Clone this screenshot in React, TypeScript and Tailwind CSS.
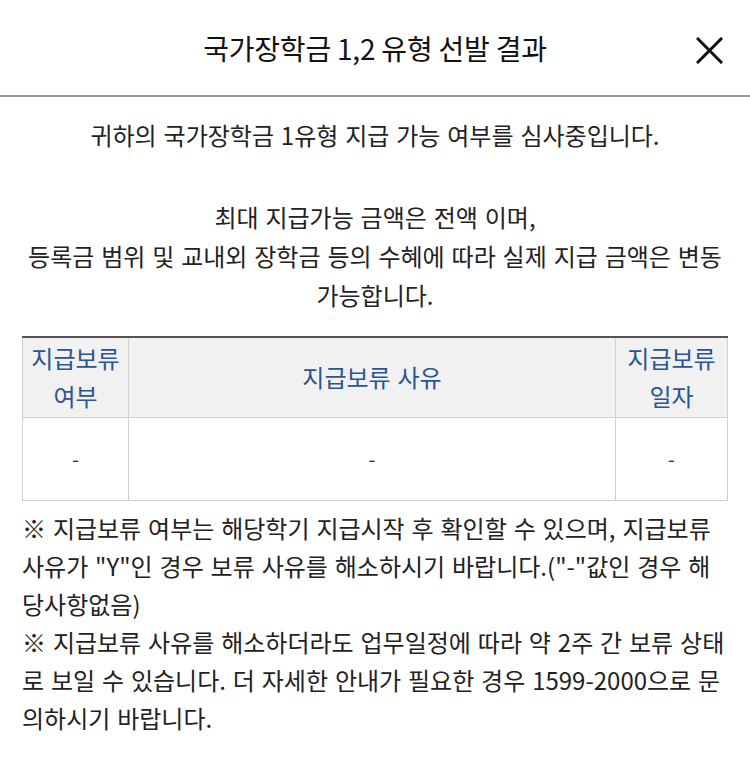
import React from "react";

export default function App() {
  const font = { fontFamily: '"Noto Sans CJK KR", "Noto Sans", sans-serif' };
  return (
    <div className="w-[750px] min-h-[779px] bg-white text-[#222]" style={font}>
      <header className="relative h-[97px] flex items-center justify-center border-b-2 border-[#9a9a9a]">
        <h1 className="text-[28px] leading-none text-[#111] tracking-[-0.2px]">국가장학금 1,2 유형 선발 결과</h1>
        <button className="absolute right-[27px] top-[37px] w-[27px] h-[27px] flex items-center justify-center" aria-label="닫기">
          <svg width="27" height="27" viewBox="0 0 27 27" fill="none" stroke="#111" strokeWidth="3" strokeLinecap="square">
            <line x1="2" y1="2" x2="25" y2="25" />
            <line x1="25" y1="2" x2="2" y2="25" />
          </svg>
        </button>
      </header>
      <main className="px-[22px] pt-[18px] text-[24px] [word-spacing:1.5px]">
        <p className="text-center leading-[39px]">귀하의 국가장학금 1유형 지급 가능 여부를 심사중입니다.</p>
        <p className="mt-[43px] text-center leading-[39px]">
          최대 지급가능 금액은 전액 이며,
          <br />
          등록금 범위 및 교내외 장학금 등의 수혜에 따라 실제 지급 금액은 변동 가능합니다.
        </p>
        <table className="mt-[22px] w-[706px] border-collapse text-[24px]">
          <thead>
            <tr className="h-[80px] bg-[#f1f1f1] text-[#2a5590]">
              <th className="w-[106px] border border-[#cfcfcf] border-t-[#555] border-t-2 font-normal leading-[38px] px-0">지급보류<br />여부</th>
              <th className="border border-[#cfcfcf] border-t-[#555] border-t-2 font-normal leading-[38px]">지급보류 사유</th>
              <th className="w-[112px] border border-[#cfcfcf] border-t-[#555] border-t-2 font-normal leading-[38px] px-0">지급보류<br />일자</th>
            </tr>
          </thead>
          <tbody>
            <tr className="h-[83px] text-[#333] text-[20px]">
              <td className="border border-[#cfcfcf] text-center">-</td>
              <td className="border border-[#cfcfcf] text-center">-</td>
              <td className="border border-[#cfcfcf] text-center">-</td>
            </tr>
          </tbody>
        </table>
        <div className="mt-[8px] leading-[38px] text-[#222]">
          <p>※ 지급보류 여부는 해당학기 지급시작 후 확인할 수 있으며, 지급보류 사유가 "Y"인 경우 보류 사유를 해소하시기 바랍니다.("-"값인 경우 해당사항없음)</p>
          <p>※ 지급보류 사유를 해소하더라도 업무일정에 따라 약 2주 간 보류 상태로 보일 수 있습니다. 더 자세한 안내가 필요한 경우 1599-2000으로 문의하시기 바랍니다.</p>
        </div>
      </main>
    </div>
  );
}
